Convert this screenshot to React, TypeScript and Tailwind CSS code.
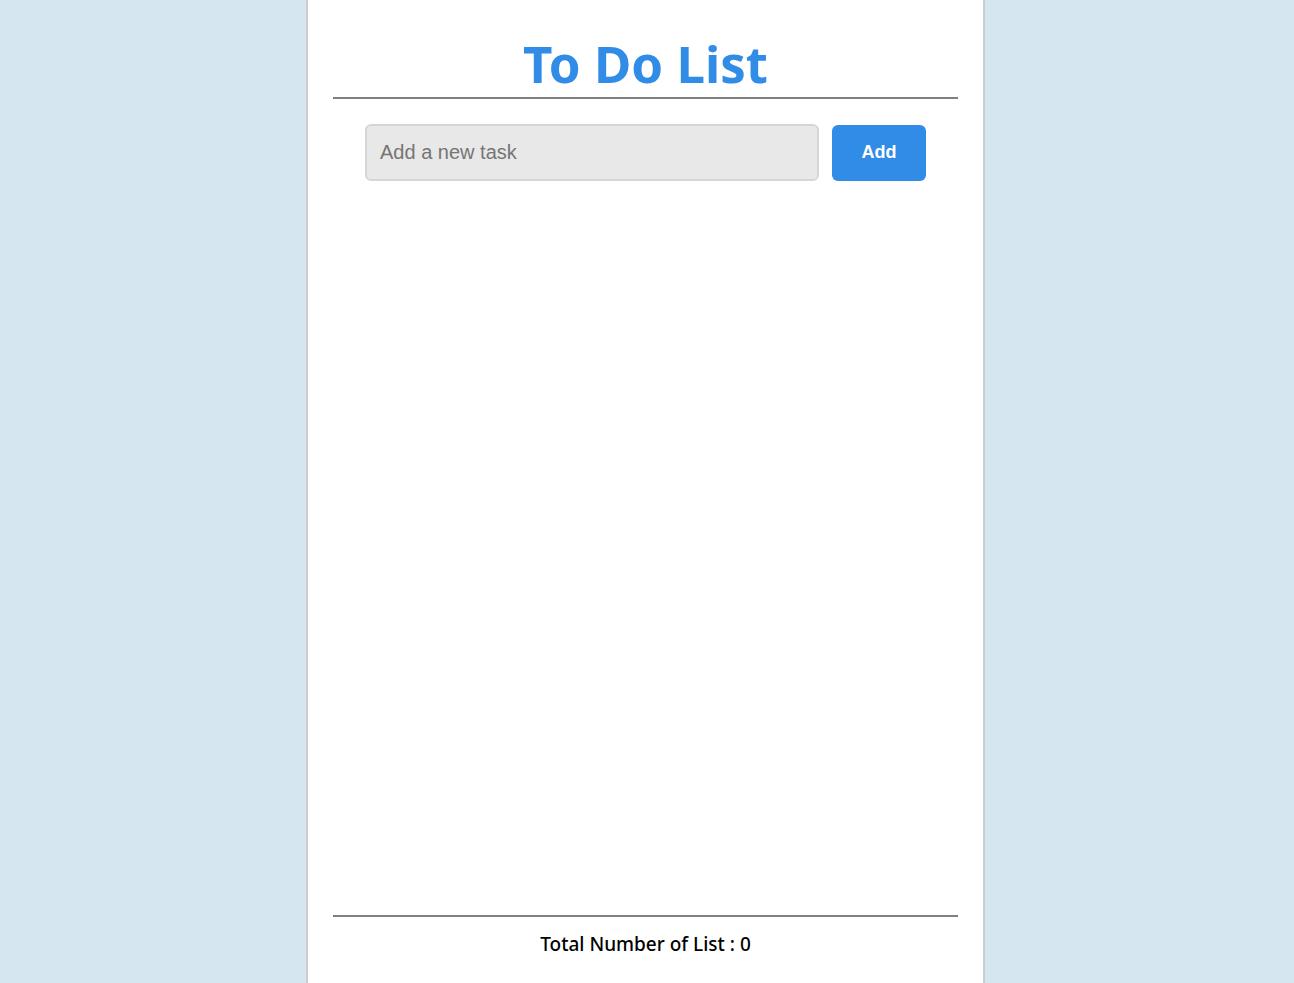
import { useState } from 'react';

export default function App() {
  const [task, setTask] = useState('');
  const [tasks, setTasks] = useState<string[]>([]);

  const addTask = () => {
    if (!task.trim()) return;
    setTasks((prev) => [...prev, task.trim()]);
    setTask('');
  };

  return (
    <div className="min-h-screen bg-[#d5e6f0] pr-[3px] font-['Noto_Sans',sans-serif]">
      <div className="w-[679px] mx-auto min-h-screen bg-white border-x-2 border-[#cdcdcd] px-[25px] flex flex-col">
        <h1 className="text-center text-[51px] leading-none font-bold text-[#318ce7] pt-[38px] pb-[8px] border-b-2 border-[#808080]">
          To Do List
        </h1>

        <div className="flex justify-center gap-[13px] mt-[25px]">
          <input
            value={task}
            onChange={(e) => setTask(e.target.value)}
            onKeyDown={(e) => e.key === 'Enter' && addTask()}
            placeholder="Add a new task"
            className="w-[454px] h-[57px] bg-[#e8e8e8] border-2 border-[#d6d6d6] rounded-[6px] px-[13px] text-[20px] font-['Liberation_Sans',sans-serif] text-[#333] placeholder:text-[#757575] outline-none"
          />
          <button
            onClick={addTask}
            className="w-[94px] h-[56px] mt-px bg-[#318ce7] rounded-[6px] text-white font-bold text-[18px] leading-none pb-[2px] font-['Liberation_Sans',sans-serif]"
          >
            Add
          </button>
        </div>

        <ul className="flex-1 mt-4 px-8">
          {tasks.map((t, i) => (
            <li key={i} className="py-2 text-[18px] border-b border-gray-200">{t}</li>
          ))}
        </ul>

        <div className="border-t-2 border-[#808080] text-center text-[19px] leading-[30px] font-medium text-black pt-[12px] pb-[24px]">
          Total Number of List : {tasks.length}
        </div>
      </div>
    </div>
  );
}
